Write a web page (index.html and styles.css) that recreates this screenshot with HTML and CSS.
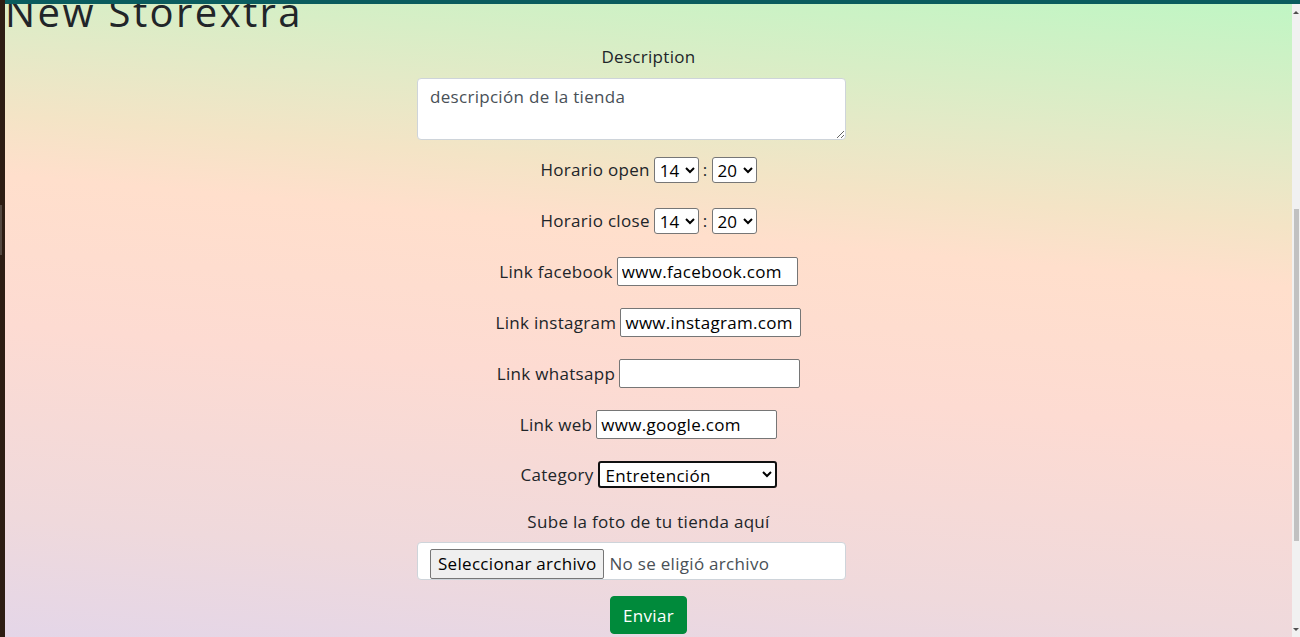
FILE: index.html
```html
<!DOCTYPE html>
<html lang="es">
<head>
<meta charset="utf-8">
<title>New Storextra</title>
<link rel="stylesheet" href="styles.css">
</head>
<body>
<div class="window">
  <div class="edge"><span class="edge-mark"></span></div>
  <div class="viewport">
    <div class="topbar"></div>
    <div class="content-row">
      <main class="page">
        <h1 class="title">New Storextra</h1>
        <form class="form">
          <label class="block-label" for="desc">Description</label>
          <textarea id="desc" class="textarea">descripción de la tienda</textarea>

          <div class="row row-first">
            <span class="label">Horario open</span>
            <select class="time"><option>14</option></select>
            <span class="colon">:</span>
            <select class="time"><option>20</option></select>
          </div>
          <div class="row">
            <span class="label">Horario close</span>
            <select class="time"><option>14</option></select>
            <span class="colon">:</span>
            <select class="time"><option>20</option></select>
          </div>
          <div class="row">
            <span class="label">Link facebook</span>
            <input class="text" type="text" value="www.facebook.com">
          </div>
          <div class="row">
            <span class="label">Link instagram</span>
            <input class="text" type="text" value="www.instagram.com">
          </div>
          <div class="row">
            <span class="label">Link whatsapp</span>
            <input class="text" type="text" value="">
          </div>
          <div class="row">
            <span class="label">Link web</span>
            <input class="text" type="text" value="www.google.com">
          </div>
          <div class="row row-cat">
            <span class="label">Category</span>
            <select class="category"><option>Entretención</option></select>
          </div>

          <div class="block-label photo-label">Sube la foto de tu tienda aquí</div>
          <div class="file-box">
            <span class="file-btn">Seleccionar archivo</span>
            <span class="file-name">No se eligió archivo</span>
          </div>
          <button type="button" class="submit">Enviar</button>
        </form>
      </main>
      <div class="scrollbar">
        <span class="arrow arrow-up"></span>
        <div class="thumb"></div>
        <span class="arrow arrow-down"></span>
      </div>
    </div>
  </div>
</div>
</body>
</html>
```

FILE: styles.css
```css
* { box-sizing: border-box; }

html, body {
  margin: 0;
  padding: 0;
  height: 637px;
  overflow: hidden;
}

body {
  font-family: "Open Sans", "Noto Sans", sans-serif;
  font-size: 17px;
  letter-spacing: 0.3px;
  color: #212529;
}

.window {
  display: flex;
  width: 1300px;
  height: 637px;
}

.edge {
  width: 5px;
  flex: none;
  background: #2d1d13;
  display: flex;
  flex-direction: column;
}

.edge-mark {
  display: block;
  width: 2px;
  height: 50px;
  margin-top: 205px;
  background: #544840;
}

.viewport {
  flex: 1;
  display: flex;
  flex-direction: column;
  min-width: 0;
}

.topbar {
  height: 4px;
  flex: none;
  background: #0a5c5e;
}

.content-row {
  flex: 1;
  display: flex;
  min-height: 0;
}

.page {
  flex: 1;
  overflow: hidden;
  background: linear-gradient(185deg,
    #c0f6c4 0%,
    #e3eac7 20%,
    #f4e4c6 30%,
    #ffdfcc 38%,
    #fddbd2 58%,
    #efd9dc 84%,
    #e4d6e8 100%);
}

.title {
  margin: -19px 0 0 0;
  font-size: 40px;
  font-weight: 400;
  line-height: 54px;
  letter-spacing: 2.4px;
  color: #212529;
}

.form {
  display: flex;
  flex-direction: column;
  align-items: center;
}

.block-label {
  display: block;
  line-height: 24px;
  margin-top: 6px;
}

.textarea {
  display: block;
  margin: 9px 34px 0 0;
  width: 429px;
  height: 62px;
  padding: 6px 12px;
  border: 1px solid #ced4da;
  border-radius: 4px;
  background: #fff;
  font-family: inherit;
  font-size: 17px;
  letter-spacing: 0.3px;
  line-height: 24px;
  color: #495057;
  resize: vertical;
}

.row {
  display: flex;
  align-items: center;
  justify-content: center;
  height: 29px;
  margin-top: 22px;
  gap: 4px;
}

.row-first { margin-top: 15px; }
.row-cat { margin-top: 21px; }

.label { line-height: 24px; }

.colon { padding: 0; }

.time {
  width: 45px;
  height: 26px;
  font-family: inherit;
  font-size: 17px;
  color: #000;
  background: #fff;
  border: 1px solid #767676;
  border-radius: 3px;
  padding: 0 0 0 1px;
}

.text {
  width: 181px;
  height: 29px;
  padding: 1px 4px;
  font-family: inherit;
  font-size: 17px;
  letter-spacing: 0.3px;
  color: #000;
  background: #fff;
  border: 1px solid #767676;
  border-radius: 2px;
}

.category {
  width: 179px;
  height: 27px;
  font-family: inherit;
  font-size: 17px;
  letter-spacing: 0.3px;
  color: #000;
  background: #fff;
  border: 2px solid #101010;
  border-radius: 3px;
  padding: 0 0 0 2px;
}

.photo-label { margin-top: 21px; }

.file-box {
  margin: 8px 34px 0 0;
  width: 429px;
  height: 38px;
  padding: 6px 12px 0;
  background: #fff;
  border: 1px solid #ced4da;
  border-radius: 4px;
  display: flex;
  align-items: flex-start;
  gap: 5px;
  text-align: left;
}

.file-btn {
  height: 30px;
  line-height: 28px;
  padding: 0 7px;
  background: #efefef;
  border: 1px solid #767676;
  border-radius: 2px;
  color: #000;
  white-space: nowrap;
}

.file-name {
  line-height: 30px;
  color: #495057;
  white-space: nowrap;
}

.submit {
  margin-top: 16px;
  height: 38px;
  padding: 0 12px;
  font-family: inherit;
  font-size: 17px;
  letter-spacing: 0.3px;
  color: #fff;
  background: #008a3b;
  border: 1px solid #008a3b;
  border-radius: 4px;
}

.scrollbar {
  width: 8px;
  flex: none;
  background: #f1f1f1;
  display: flex;
  flex-direction: column;
  align-items: center;
}

.thumb {
  width: 5px;
  height: 332px;
  margin-top: 195px;
  margin-left: 1px;
  background: #c1c1c1;
}

.arrow {
  display: block;
  width: 0;
  height: 0;
  border-left: 3px solid transparent;
  border-right: 3px solid transparent;
}

.arrow-up {
  margin-top: 7px;
  border-bottom: 3px solid #505050;
}

.arrow-down {
  margin-top: auto;
  margin-bottom: 6px;
  border-top: 3px solid #505050;
}
```
